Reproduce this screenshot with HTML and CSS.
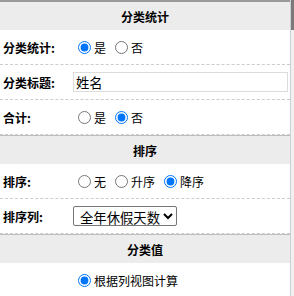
FILE: index.html
```html
<!DOCTYPE html>
<html lang="zh-CN">
<head>
<meta charset="utf-8">
<link rel="stylesheet" href="styles.css">
</head>
<body>
<div class="frame">
  <div class="panel">
    <div class="section-head">分类统计</div>
    <div class="row">
      <div class="label">分类统计:</div>
      <div class="value">
        <label class="opt"><input type="radio" name="stat" checked>是</label>
        <label class="opt"><input type="radio" name="stat">否</label>
      </div>
    </div>
    <div class="row">
      <div class="label">分类标题:</div>
      <div class="value"><input class="text" type="text" value="姓名"></div>
    </div>
    <div class="row">
      <div class="label">合计:</div>
      <div class="value">
        <label class="opt"><input type="radio" name="sum">是</label>
        <label class="opt"><input type="radio" name="sum" checked>否</label>
      </div>
    </div>

    <div class="section-head">排序</div>
    <div class="row">
      <div class="label">排序:</div>
      <div class="value">
        <label class="opt"><input type="radio" name="sort">无</label>
        <label class="opt"><input type="radio" name="sort">升序</label>
        <label class="opt"><input type="radio" name="sort" checked>降序</label>
      </div>
    </div>
    <div class="row">
      <div class="label">排序列:</div>
      <div class="value">
        <select class="sel"><option>全年休假天数</option></select>
      </div>
    </div>

    <div class="section-head">分类值</div>
    <div class="row plain">
      <div class="label"></div>
      <div class="value">
        <label class="opt"><input type="radio" name="val" checked>根据列视图计算</label>
      </div>
    </div>
  </div>
  <div class="scrollbar"><div class="thumb"></div></div>
</div>
</body>
</html>
```

FILE: styles.css
```css
html, body {
  margin: 0;
  padding: 0;
  background: #fff;
  overflow: hidden;
}
body {
  font-family: "Noto Sans CJK SC", "Microsoft YaHei", sans-serif;
  font-size: 12px;
  color: #000;
}
.frame {
  display: flex;
  height: 296px;
  overflow: hidden;
}
.panel {
  flex: 1;
  min-width: 0;
  border-top: 2px solid #999;
}
.scrollbar {
  width: 3px;
  border-left: 1px solid #cfcfcf;
  background: #f1f1f1;
  flex: none;
}
.thumb {
  height: 30px;
  background: #7a7a7a;
}
.section-head {
  height: 28px;
  background: #ececec;
  display: flex;
  align-items: center;
  justify-content: center;
  font-weight: bold;
  font-size: 12px;
}
.row + .section-head {
  border-top: 1px solid #bdbdbd;
}
.row {
  display: grid;
  grid-template-columns: 73px 1fr;
  height: 34px;
  align-items: center;
  border-bottom: 1px dashed #cccccc;
}
.row.plain {
  border-bottom: none;
}
.label {
  padding-left: 3px;
  font-weight: bold;
}
.value {
  display: flex;
  align-items: center;
  padding-right: 2px;
}
.opt {
  display: inline-flex;
  align-items: center;
  margin-right: 4px;
}
.opt input {
  margin: 0 3px 0 5px;
  width: 13px;
  height: 13px;
}
.text {
  flex: 1;
  min-width: 0;
  height: 20px;
  box-sizing: border-box;
  border: 1px solid #dcdcdc;
  padding: 0 2px;
  font-family: "Noto Sans CJK SC", "Microsoft YaHei", sans-serif;
  font-size: 13.33px;
  outline: none;
}
.sel {
  width: 104px;
  height: 20px;
  box-sizing: border-box;
  font-family: "Noto Sans CJK SC", "Microsoft YaHei", sans-serif;
  font-size: 13.33px;
  color: #000;
  border: 1px solid #767676;
  border-radius: 2px;
  background: #fff;
  padding: 0 0 0 2px;
}
```
